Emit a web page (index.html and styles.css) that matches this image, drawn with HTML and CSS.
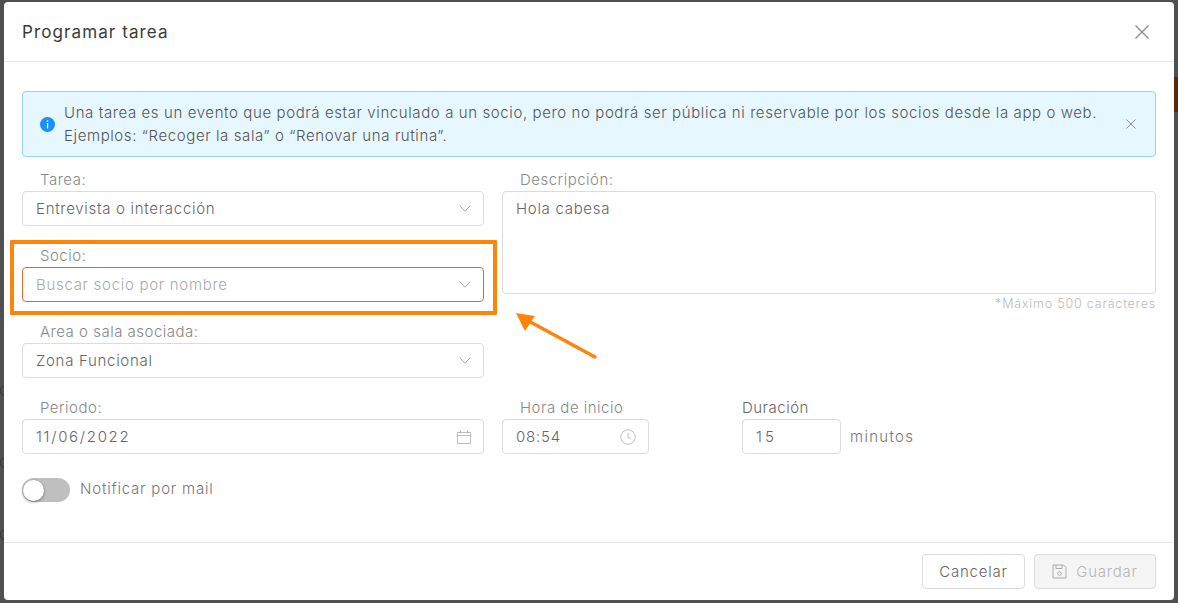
FILE: index.html
```html
<!DOCTYPE html>
<html lang="es">
<head>
<meta charset="utf-8">
<title>Programar tarea</title>
<link rel="stylesheet" href="styles.css">
</head>
<body>
<div class="backdrop-band"></div>
<span class="backdrop-mark mark-a"></span>
<span class="backdrop-mark mark-b"></span>
<span class="backdrop-mark mark-c"></span>
<main class="modal">
  <header class="modal-header">
    <h1 class="modal-title">Programar tarea</h1>
    <svg class="modal-close" width="16" height="16" viewBox="0 0 16 16"><path d="M1.5 1.5l13 13M14.5 1.5l-13 13"/></svg>
  </header>
  <section class="modal-body">
    <div class="alert">
      <svg class="alert-icon" width="15" height="15" viewBox="0 0 15 15"><circle cx="7.5" cy="7.5" r="7.5" fill="#1890ff"/><rect x="6.9" y="3.2" width="1.3" height="1.5" fill="#fff"/><rect x="6.9" y="5.9" width="1.3" height="5.6" fill="#fff"/></svg>
      <p class="alert-text">Una tarea es un evento que podrá estar vinculado a un socio, pero no podrá ser pública ni reservable por los socios desde la app o web.<br>Ejemplos: “Recoger la sala” o “Renovar una rutina”.</p>
      <svg class="alert-close" width="10" height="10" viewBox="0 0 10 10"><path d="M.5.5l9 9M9.5.5l-9 9"/></svg>
    </div>
    <div class="columns">
      <div class="col-left">
        <div class="field">
          <label class="label">Tarea:</label>
          <div class="control"><span class="value">Entrevista o interacción</span><svg class="chev" width="12" height="7" viewBox="0 0 12 7"><path d="M.8.8L6 6.2 11.2.8"/></svg></div>
        </div>
        <div class="field">
          <label class="label">Socio:</label>
          <div class="control control-error"><span class="placeholder">Buscar socio por nombre</span><svg class="chev" width="12" height="7" viewBox="0 0 12 7"><path d="M.8.8L6 6.2 11.2.8"/></svg></div>
        </div>
        <div class="field">
          <label class="label">Area o sala asociada:</label>
          <div class="control"><span class="value">Zona Funcional</span><svg class="chev" width="12" height="7" viewBox="0 0 12 7"><path d="M.8.8L6 6.2 11.2.8"/></svg></div>
        </div>
      </div>
      <div class="col-right">
        <label class="label">Descripción:</label>
        <div class="textarea">Hola cabesa</div>
        <div class="hint">*Máximo 500 carácteres</div>
      </div>
    </div>
    <div class="time-row">
      <div class="field period">
        <label class="label">Periodo:</label>
        <div class="control"><span class="value spaced">11/06/2022</span><svg class="ico" width="14" height="14" viewBox="0 0 14 14"><path d="M.5 2.5h13v11H.5zM.5 5.5h13M3.5.5v3M10.5.5v3"/></svg></div>
      </div>
      <div class="field start">
        <label class="label">Hora de inicio</label>
        <div class="control"><span class="value spaced-short">08:54</span><svg class="ico" width="16" height="16" viewBox="0 0 16 16"><circle cx="8" cy="8" r="7.2"/><path d="M8 4v4.4l2.6 1.6"/></svg></div>
      </div>
      <div class="field duration">
        <label class="label label-plain">Duración</label>
        <div class="duration-line">
          <div class="control control-short"><span class="value spaced-wide">15</span></div>
          <span class="unit">minutos</span>
        </div>
      </div>
    </div>
    <div class="toggle-row">
      <span class="toggle"><span class="knob"></span></span>
      <span class="toggle-label">Notificar por mail</span>
    </div>
  </section>
  <footer class="modal-footer">
    <button class="btn" type="button">Cancelar</button>
    <button class="btn btn-disabled" type="button"><svg width="15" height="15" viewBox="0 0 15 15" class="save"><path d="M1 1h10.5L14 3.5V14H1zM4 1v3.5h6V1"/><circle cx="7.5" cy="9.5" r="1.8"/></svg>Guardar</button>
  </footer>
</main>
<div class="highlight"></div>
<svg class="arrow" width="90" height="50" viewBox="0 0 90 50"><path class="arrow-line" d="M84 45L12 6"/><path class="arrow-head" d="M5 1l19 3-10 15z"/></svg>
</body>
</html>
```
FILE: styles.css
```css
* { box-sizing: border-box; }
html, body { margin: 0; height: 100%; }
body {
  width: 1178px;
  height: 603px;
  overflow: hidden;
  background: #505050;
  font-family: Inter, "Liberation Sans", sans-serif;
  font-size: 15px;
  font-weight: 300;
  letter-spacing: .7px;
  color: #666;
  padding: 2px 4px 3px;
  position: relative;
}
.backdrop-band {
  position: absolute;
  right: 0;
  top: 77px;
  width: 4px;
  height: 35px;
  background: #5c2808;
}
.backdrop-mark {
  position: absolute;
  left: 0;
  width: 10px;
  height: 11px;
  border: 1px solid #35383d;
  border-radius: 50%;
}
.mark-a { top: 385px; }
.mark-b { top: 457px; }
.mark-c { top: 529px; }
.modal {
  position: relative;
  width: 1170px;
  height: 598px;
  background: #fff;
  border-radius: 4px;
  display: flex;
  flex-direction: column;
}
.modal-header {
  height: 60px;
  flex: none;
  border-bottom: 1px solid #e8e8e8;
  display: flex;
  align-items: center;
  justify-content: space-between;
  padding: 0 24px 0 18px;
}
.modal-title {
  margin: 0;
  font-size: 17px;
  font-weight: 400;
  color: #3a3a3a;
  letter-spacing: 1.1px;
}
.modal-close path { stroke: #8c8c8c; stroke-width: 1.3; fill: none; }
.modal-body {
  flex: 1;
  padding: 29px 18px 0;
}
.alert {
  height: 66px;
  background: #e6f7ff;
  border: 1px solid #91d5ff;
  border-radius: 4px;
  display: flex;
  align-items: center;
  padding: 0 19px 0 17px;
  margin-bottom: 10px;
}
.alert-icon { flex: none; margin-right: 9px; }
.alert-text {
  margin: 0;
  flex: 1;
  font-size: 15px;
  line-height: 23px;
  color: #555;
  letter-spacing: .6px;
}
.alert-close path { stroke: #8c8c8c; stroke-width: 1; fill: none; }
.columns { display: flex; gap: 18px; }
.col-left { width: 462px; flex: none; }
.col-right { flex: 1; display: flex; flex-direction: column; }
.field { margin-bottom: 17px; }
.label {
  display: block;
  height: 24px;
  line-height: 25px;
  padding-left: 18px;
  color: #888;
  font-size: 15px;
  letter-spacing: .5px;
}
.label-plain { padding-left: 0; color: #666; }
.control {
  height: 35px;
  border: 1px solid #dcdcdc;
  border-radius: 4px;
  display: flex;
  align-items: center;
  justify-content: space-between;
  padding: 0 12px 0 13px;
  background: #fff;
}
.control-error { border-color: #e8672f; }
.control-short { width: 99px; }
.value { color: #666; }
.spaced { letter-spacing: 1.7px; }
.spaced-short { letter-spacing: .8px; }
.spaced-wide { letter-spacing: 3px; }
.placeholder { color: #aaa; }
.chev { flex: none; }
.chev path { stroke: #a8a8a8; stroke-width: 1; fill: none; }
.ico path, .ico circle { stroke: #bdbdbd; stroke-width: 1; fill: none; }
.textarea {
  height: 103px;
  border: 1px solid #dcdcdc;
  border-radius: 4px;
  padding: 6px 13px;
  line-height: 22px;
  color: #666;
}
.hint {
  margin-top: 2px;
  text-align: right;
  font-size: 12.5px;
  line-height: 16px;
  color: #bbb;
  letter-spacing: .8px;
}
.time-row { display: flex; }
.period { width: 462px; flex: none; margin-right: 18px; }
.start { width: 147px; flex: none; margin-right: 93px; }
.duration { flex: 1; }
.duration-line { display: flex; align-items: center; gap: 9px; }
.unit { color: #777; letter-spacing: 1.3px; }
.toggle-row { display: flex; align-items: center; gap: 10px; margin-top: 7px; }
.toggle {
  display: flex;
  align-items: center;
  width: 48px;
  height: 24px;
  border-radius: 12px;
  background: #bfbfbf;
  padding-left: 1px;
}
.knob {
  width: 21px;
  height: 21px;
  border-radius: 50%;
  background: #fff;
  box-shadow: 0 1px 3px rgba(0,0,0,.45);
}
.toggle-label { color: #777; line-height: 22px; margin-top: -2px; letter-spacing: .8px; }
.modal-footer {
  height: 58px;
  flex: none;
  border-top: 1px solid #e8e8e8;
  display: flex;
  justify-content: flex-end;
  align-items: flex-start;
  gap: 9px;
  padding: 11px 18px 0;
}
.btn {
  height: 35px;
  width: 103px;
  border: 1px solid #dcdcdc;
  border-radius: 4px;
  background: #fff;
  color: #666;
  font: inherit;
  letter-spacing: .8px;
  display: flex;
  align-items: center;
  justify-content: center;
}
.btn-disabled {
  width: 122px;
  background: #f5f5f5;
  color: #b5b5b5;
  gap: 9px;
}
.save path, .save circle { stroke: #ababab; stroke-width: 1; fill: none; }
.highlight {
  position: absolute;
  left: 10px;
  top: 240px;
  width: 487px;
  height: 75px;
  border: 4px solid #ff8408;
  border-radius: 1px;
}
.arrow { position: absolute; left: 511px; top: 312px; }
.arrow-line { stroke: #ff8408; stroke-width: 3.5; stroke-linecap: round; fill: none; }
.arrow-head { fill: #ff8408; }
```
